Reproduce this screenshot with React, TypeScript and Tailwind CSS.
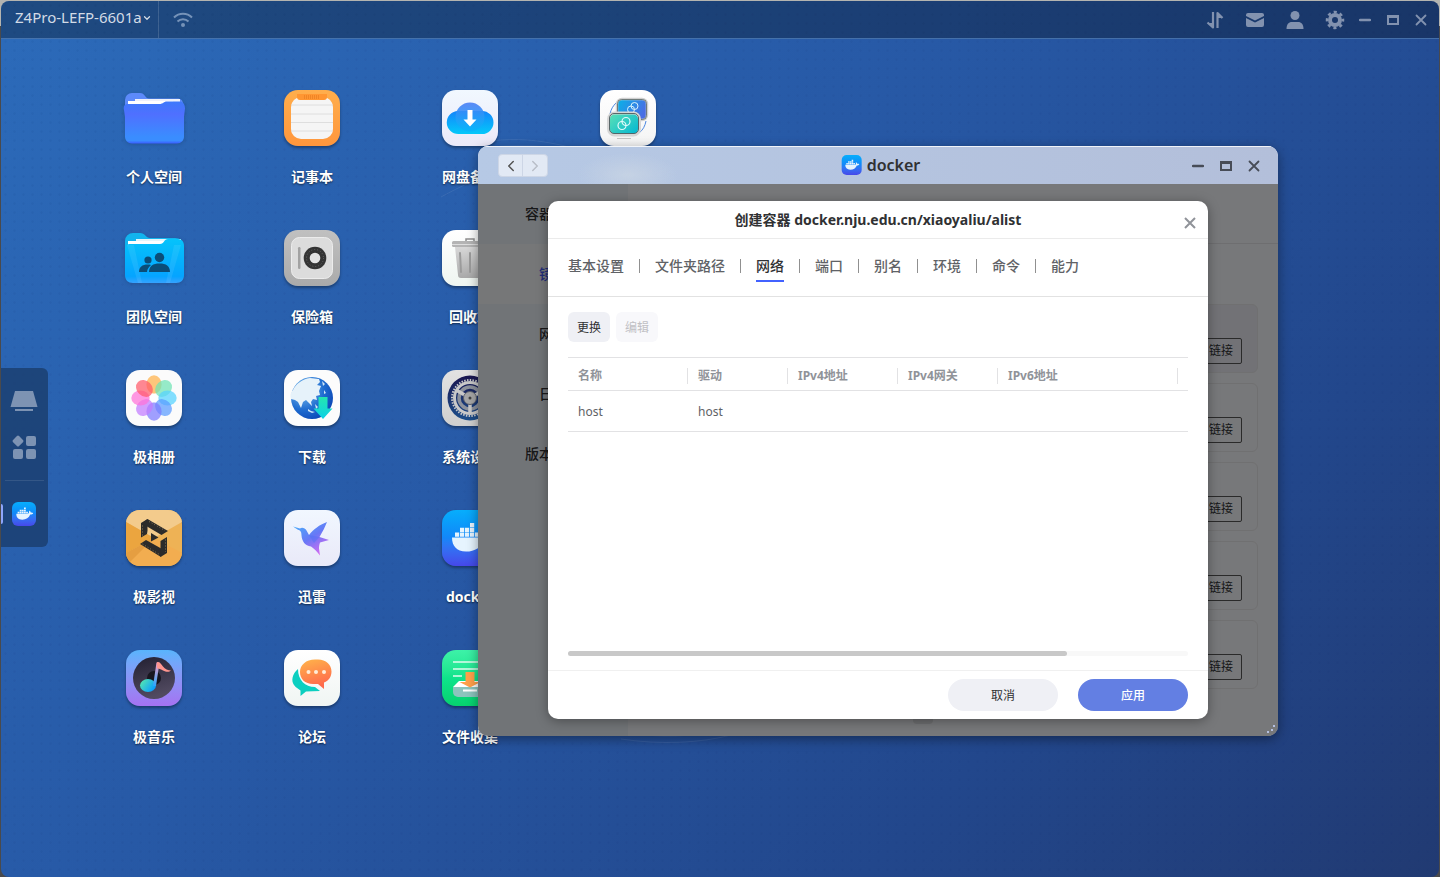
import React from "react";
import { LuChevronDown, LuChevronLeft, LuChevronRight } from "react-icons/lu";

const tile = "h-14 w-14 rounded-[14px] shadow-[0_2px_3px_rgba(0,0,0,0.35)]";

function FolderIcon() {
  return (
    <svg viewBox="0 0 62 56" className="h-14 w-[62px] shrink-0 drop-shadow-sm">
      <defs>
        <linearGradient id="folder" x1="0" y1="0" x2="0" y2="1">
          <stop offset="0" stopColor="#3d79fb" />
          <stop offset="0.3" stopColor="#4f70ff" />
          <stop offset="0.85" stopColor="#3a8dff" />
          <stop offset="0.93" stopColor="#3a8dff" />
          <stop offset="1" stopColor="#3a5cff" />
        </linearGradient>
      </defs>
      <path d="M2 10a7 7 0 0 1 7-7h8c5 0 5 5.500 9 5.500h28c4 0 6 2 6 6v8H2z" fill="#5c8afa" />
      <path d="M12 9h45v10H12z" fill="#eef1fb" />
      <path d="M5 11h45v8H5z" fill="#fff" />
      <path
        d="M1 20c-1-4 1-6 4-6h31c5 0 4-2.500 8-2.500h13c3 0 5 3 5 7l-1 8v20c0 4-3 7-7 7H9c-4 0-7-3-7-7V27z"
        fill="url(#folder)"
      />
    </svg>
  );
}

function TeamIcon() {
  return (
    <svg viewBox="0 0 62 56" className="h-14 w-[62px] shrink-0 drop-shadow-sm">
      <defs>
        <linearGradient id="team" x1="0" y1="0" x2="0" y2="1">
          <stop offset="0" stopColor="#05c3fb" />
          <stop offset="0.85" stopColor="#05a4ff" />
          <stop offset="1" stopColor="#36a2ff" />
        </linearGradient>
      </defs>
      <path d="M2 11a8 8 0 0 1 8-8h7c5 0 6 5 10 5h25c5 0 8 3 8 7v8H2z" fill="#12b4ee" />
      <path d="M13 9h45v8H13z" fill="#e4f5fb" />
      <path d="M5 11h40v8H5z" fill="#fff" />
      <path
        d="M2 21c0-5 2-7 5-7h30c4 0 4-5 8-5h10c4 0 6 3 6 7v29c0 5-3 8-8 8H10c-5 0-8-3-8-8z"
        fill="url(#team)"
      />
      <path d="M4 15h7l8 38h-4zM58 15h-7l-8 38h4z" fill="#fff" opacity="0.08" />
      <g fill="#0b4d78">
        <circle cx="25" cy="30" r="3.600" />
        <path d="M16 42c0-5 3-7.500 9-7.500 1 0 2 0 3 .5-2 2-4 4-4 7z" />
        <circle cx="36.500" cy="27.500" r="4.700" />
        <path d="M26 42c0-6 4-8.500 10.500-8.500S47 36 47 42z" />
      </g>
    </svg>
  );
}

function PhotosIcon() {
  const petals = ["#ffb14a", "#6fe3b4", "#55d2ff", "#5a9bff", "#7d7bff", "#c27bff", "#ff72d8", "#ff5a6a"];
  return (
    <svg viewBox="0 0 56 56" className={`${tile} bg-[#fbfbfb]`}>
      {petals.map((color, i) => (
        <ellipse
          key={color}
          cx="28"
          cy="14.500"
          rx="7.600"
          ry="9.200"
          fill={color}
          fillOpacity="0.72"
          transform={`rotate(${i * 45} 28 28)`}
        />
      ))}
      <circle cx="28" cy="28" r="4.200" fill="#fff" />
    </svg>
  );
}

function MovieIcon() {
  return (
    <svg viewBox="0 0 56 56" className={`${tile} bg-[#eeb255]`}>
      <path d="M0 0h56v12L28 28 0 12z" fill="#f3cb8c" />
      <path d="M0 12l28 16L0 43z" fill="#eba53f" />
      <path d="M0 43l28-15 28 15v13H0z" fill="#f2ad50" />
      <path d="M0 56V43l28-15z" fill="#d88f31" opacity="0.5" />
      <g fill="#2c2b2a">
        <path d="M15 13l6.500-4v11.500L21 24l-6 3.500z" />
        <path d="M21.500 9L42 21l-6.500 4L16 13.500z" />
        <path d="M14 34l6-4 17 9.500-2 7.500z" />
        <path d="M41 27v16l-6.500 4V31z" />
        <path d="M25 23v8.500l7.500-4z" />
      </g>
      <g fill="none" stroke="#a68c60" strokeWidth="0.800" strokeDasharray="1 2">
        <path d="M16.500 15.500v10M23 11.500l16 9M16.500 34l17 10.500M39.500 29.500v12.500" />
      </g>
    </svg>
  );
}

function MusicIcon() {
  return (
    <svg viewBox="0 0 56 56" className={`${tile} bg-gradient-to-b from-[#58b4fc] to-[#a472f2]`}>
      <defs>
        <linearGradient id="disc" x1="0" y1="0" x2="0.300" y2="1">
          <stop offset="0" stopColor="#221f31" />
          <stop offset="1" stopColor="#514a60" />
        </linearGradient>
        <linearGradient id="note" x1="0" y1="0" x2="1" y2="0.600">
          <stop offset="0" stopColor="#5cf0a8" />
          <stop offset="1" stopColor="#0a9dff" />
        </linearGradient>
        <linearGradient id="stem" x1="0" y1="0" x2="0" y2="1">
          <stop offset="0" stopColor="#ff9ac0" />
          <stop offset="1" stopColor="#2aa6ff" />
        </linearGradient>
      </defs>
      <circle cx="28" cy="28" r="21" fill="url(#disc)" />
      <circle cx="28" cy="28" r="7" fill="#18161f" />
      <ellipse cx="22" cy="35.500" rx="8" ry="6.500" fill="url(#note)" />
      <path d="M30.500 12.500h3L30 36h-3z" fill="url(#stem)" />
      <path d="M31 12c3 0 4 2 6 4.500s5 4 8 4c-2 2-5 1.500-8 0s-4-2-6-2z" fill="#ff958f" />
    </svg>
  );
}

function NotesIcon() {
  return (
    <svg viewBox="0 0 56 56" className={`${tile} bg-gradient-to-b from-[#ffae4c] to-[#ff963c]`}>
      <rect x="7" y="7" width="42" height="42" rx="10" fill="#f5f5f5" />
      <path d="M7 15h42M7 24h42M7 32.500h42M7 41h42" stroke="#dedede" strokeWidth="1" />
      <path d="M13 4h30v3a3 3 0 0 1-3 3H16a3 3 0 0 1-3-3z" fill="#ff9632" />
      <path d="M20 6h16M20 8h16" stroke="#e0741b" strokeWidth="1" strokeDasharray="1 1" />
    </svg>
  );
}

function SafeIcon() {
  return (
    <svg viewBox="0 0 56 56" className={`${tile} bg-gradient-to-b from-[#c0c0c0] to-[#aaaaaa]`}>
      <rect x="7.500" y="7.500" width="41" height="41" rx="8" fill="#dcdcdc" stroke="#ececec" />
      <rect x="14" y="17" width="2.500" height="22" rx="1.200" fill="#a2a2a2" />
      <circle cx="31" cy="28" r="11.300" fill="#343434" />
      <circle cx="31" cy="28" r="8.500" fill="none" stroke="#666" strokeDasharray="1 2" />
      <circle cx="31" cy="28" r="5.300" fill="#e3e3e3" />
    </svg>
  );
}

function DownloadIcon() {
  return (
    <svg viewBox="0 0 56 56" className={`${tile} bg-[#fcfcfc]`}>
      <defs>
        <radialGradient id="globe" cx="0.300" cy="0.300" r="0.800">
          <stop offset="0" stopColor="#7fc2f0" />
          <stop offset="0.600" stopColor="#1f6cd0" />
          <stop offset="1" stopColor="#0a45b4" />
        </radialGradient>
        <linearGradient id="down" x1="0" y1="0" x2="0" y2="1">
          <stop offset="0" stopColor="#24e6b0" />
          <stop offset="1" stopColor="#0cd0e6" />
        </linearGradient>
      </defs>
      <circle cx="28" cy="28" r="21" fill="url(#globe)" />
      <path
        d="M9 20c3-6 9-11 17-12l9 1 1 3-3 3 4 1-2 5 1 4-4 1 1 4-4-1-2 3 1 4-3-3-3-3-3 2-2 6-3-6-3-2-4-1c-1-3-1-6 2-9z"
        fill="#e6f2fa"
      />
      <path d="M24 39l3 2 4 1-3 1-4-2zM38 11l3 3-2 2zM31 34l3 3-2 2zM40 20l2 3-2 1z" fill="#cfe6f7" />
      <path d="M34.500 27h9v11.500h5L39 49l-9.500-10.500h5z" fill="url(#down)" />
    </svg>
  );
}

function ThunderIcon() {
  return (
    <svg viewBox="0 0 56 56" className={`${tile} bg-gradient-to-b from-[#f1f7ff] to-[#e9e9f8]`}>
      <defs>
        <linearGradient id="bird" x1="0" y1="0" x2="0.700" y2="1">
          <stop offset="0" stopColor="#45b6fb" />
          <stop offset="0.550" stopColor="#6878f6" />
          <stop offset="1" stopColor="#d56cf2" />
        </linearGradient>
      </defs>
      <path
        d="M9 16.500l7 2c2-1.500 5-.5 6.500 2L25 25c5-6 10-10 18-13-2 5-4 9-7.500 15l9.500 3-9 2.500c-1 3-1 4-1 6l1 7c-3-4-6-7-9-9-6-1-9-5-9.500-11 0-4-1-5-4-6z"
        fill="url(#bird)"
      />
      <path d="M25 25l10.500 2L30 33z" fill="#4a6df5" opacity="0.400" />
    </svg>
  );
}

function ForumIcon() {
  return (
    <svg viewBox="0 0 56 56" className={`${tile} bg-gradient-to-b from-[#ffffff] to-[#f0f5f3]`}>
      <defs>
        <linearGradient id="chat" x1="0" y1="0" x2="0.300" y2="1">
          <stop offset="0" stopColor="#ffb54a" />
          <stop offset="1" stopColor="#ff6a4c" />
        </linearGradient>
      </defs>
      <path d="M14 19C8 24 7 31 10 35c2 3 5 4 6.500 5.500V46l5.500-4.500 14-.5-5-4C21 37 14 30 14 19z" fill="#0ccfc0" />
      <path
        d="M31 9.500h3c8 0 13.500 5 13.500 12 0 5-2.500 9-7.500 11v6.500l-6-5H29c-8 0-13-5-13-12s6-12.500 15-12.500z"
        fill="url(#chat)"
      />
      <g fill="#ffecd8">
        <circle cx="24.500" cy="22" r="2" />
        <circle cx="32" cy="22" r="2" />
        <circle cx="40" cy="22" r="2" />
      </g>
    </svg>
  );
}

function CloudIcon() {
  return (
    <svg viewBox="0 0 56 56" className={`${tile} bg-gradient-to-b from-[#f1f8ff] to-[#ebe9f8]`}>
      <defs>
        <linearGradient id="cloud" x1="0" y1="0" x2="0" y2="1">
          <stop offset="0" stopColor="#1486fb" />
          <stop offset="1" stopColor="#04c8fa" />
        </linearGradient>
        <linearGradient id="puff" x1="0" y1="0" x2="0" y2="1">
          <stop offset="0" stopColor="#4a7df5" />
          <stop offset="1" stopColor="#06b6fb" />
        </linearGradient>
      </defs>
      <path d="M16.500 44a11.500 11.500 0 0 1-.5-23h24a11.500 11.500 0 0 1 0 23z" fill="url(#cloud)" />
      <circle cx="28" cy="27" r="14.500" fill="url(#puff)" opacity="0.900" />
      <path d="M25.500 20h5v9.500h4L28 36.500l-6.500-7h4z" fill="#fff" />
    </svg>
  );
}

function TrashIcon() {
  return (
    <svg viewBox="0 0 56 56" className={`${tile} bg-gradient-to-b from-[#ffffff] to-[#eef5f0]`}>
      <defs>
        <linearGradient id="bin" x1="0" y1="0" x2="0" y2="1">
          <stop offset="0" stopColor="#d8d8d8" />
          <stop offset="1" stopColor="#a9a9a9" />
        </linearGradient>
      </defs>
      <path d="M24 11V9h8v2" fill="none" stroke="#8e8e8e" strokeWidth="1.500" />
      <path d="M13 17h30l-3 28c0 2-1 3-3 3H19c-2 0-3-1-3-3z" fill="url(#bin)" />
      <rect x="10" y="11" width="36" height="6" rx="1.500" fill="#b4b4b4" />
      <path d="M10 14.500h36" stroke="#dedede" />
      <path d="M18 23l1 19M28 23v19M38 23l-1 19" stroke="#9b9b9b" strokeWidth="2" strokeLinecap="round" />
    </svg>
  );
}

function SettingsIcon() {
  return (
    <svg viewBox="0 0 56 56" className={`${tile} bg-gradient-to-b from-[#e2e2e2] to-[#cfcfcf]`}>
      <defs>
        <linearGradient id="deep" x1="0" y1="0" x2="0" y2="1">
          <stop offset="0" stopColor="#1a1650" />
          <stop offset="1" stopColor="#1c4f8c" />
        </linearGradient>
      </defs>
      <circle cx="28" cy="28" r="22.500" fill="url(#deep)" />
      <g fill="none" stroke="#c9c9c9">
        <circle cx="28" cy="28" r="18" strokeWidth="2" strokeDasharray="1.500 1.300" />
        <circle cx="28" cy="28" r="15.500" strokeWidth="3" />
        <circle cx="28" cy="28" r="11" strokeWidth="3.500" stroke="#8d929c" />
        <path d="M28 28v16M28 28l-14-8M28 28l14-8" strokeWidth="3.500" />
      </g>
      <circle cx="28" cy="28" r="6.500" fill="#a7a7a7" stroke="#5a5f6b" />
      <circle cx="28" cy="28" r="1.500" fill="#444" />
    </svg>
  );
}

function DockerIcon({ className }: { className: string }) {
  return (
    <svg viewBox="0 0 56 56" className={`bg-gradient-to-b from-[#07aefc] via-[#1386f8] to-[#4547ea] ${className}`}>
      <g fill="#e6f4fe">
        <path d="M28 13h4.200v4.200H28z" />
        <path d="M18 17.800h4.200V22H18zM23 17.800h4.200V22H23zM28 17.800h4.200V22H28z" />
        <path d="M13 22.600h4.200v4.200H13zM18 22.600h4.200v4.200H18zM23 22.600h4.200v4.200H23zM28 22.600h4.200v4.200H28zM33 22.600h4.200v4.200H33z" />
        <path d="M10 27.600h27c3-.6 3.500-4 2.500-7.600 3 1 4.500 3 4.500 5 2-.6 4-.4 5.500 1-1.500 2.500-4 3.500-7 3.400C39.500 37 33 41.500 24 41.500c-9.500 0-14-5.500-14-13.900z" />
      </g>
    </svg>
  );
}

function CollectIcon() {
  return (
    <svg viewBox="0 0 56 56" className={`${tile} bg-gradient-to-b from-[#3df2a8] via-[#0ee38b] to-[#07d26e]`}>
      <path d="M11 12h34M11 19h34M11 26h9M36 26h9" stroke="#dffbee" strokeWidth="1.500" />
      <path d="M11 37l6-6h22l6 6z" fill="#fff" />
      <path d="M11 37h34v5a5 5 0 0 1-5 5H16a5 5 0 0 1-5-5z" fill="#8cc4bd" />
      <path d="M23.500 22h9v10h6L28 37.500 17.500 32h6z" fill="#ffa04a" />
      <path d="M21 40.500h14" stroke="#fff" strokeWidth="2" />
    </svg>
  );
}

function RemoteIcon() {
  return (
    <svg viewBox="0 0 56 56" className={`${tile} bg-gradient-to-b from-[#ffffff] to-[#f4f4f4]`}>
      <defs>
        <linearGradient id="back" x1="0" y1="0" x2="1" y2="0.400">
          <stop offset="0" stopColor="#06b4e8" />
          <stop offset="1" stopColor="#4a6ee4" />
        </linearGradient>
        <linearGradient id="front" x1="0" y1="0" x2="1" y2="0.800">
          <stop offset="0" stopColor="#5fe3b4" />
          <stop offset="1" stopColor="#05b8d2" />
        </linearGradient>
      </defs>
      <path d="M10 24c1-5 3-8 6-11M46 31c-1 5-3 9-7 12" fill="none" stroke="#4a86e0" />
      <rect x="17" y="9" width="30" height="21" rx="5" fill="url(#back)" stroke="#d0d0d0" strokeWidth="2.500" />
      <rect x="17.500" y="9.500" width="29" height="20" rx="4" fill="none" stroke="#566" strokeWidth="0.800" />
      <g fill="none" stroke="#d8f2fc" strokeWidth="1">
        <circle cx="34.500" cy="16" r="3.500" />
        <circle cx="31" cy="19.500" r="3.500" />
      </g>
      <rect x="8.500" y="23" width="31" height="22" rx="6" fill="url(#front)" stroke="#d6d6d6" strokeWidth="3" />
      <rect x="9.500" y="23.500" width="29" height="20" rx="4.500" fill="none" stroke="#4b5a5c" strokeWidth="0.900" />
      <path d="M17 48.500h14" stroke="#c4c4c4" strokeWidth="1.200" />
      <g fill="none" stroke="#e2fbfb" strokeWidth="1.200">
        <circle cx="26" cy="31.500" r="4" />
        <circle cx="22" cy="35.500" r="4" />
      </g>
    </svg>
  );
}

const apps = [
  { name: "个人空间", icon: <FolderIcon /> },
  { name: "团队空间", icon: <TeamIcon /> },
  { name: "极相册", icon: <PhotosIcon /> },
  { name: "极影视", icon: <MovieIcon /> },
  { name: "极音乐", icon: <MusicIcon /> },
  { name: "记事本", icon: <NotesIcon /> },
  { name: "保险箱", icon: <SafeIcon /> },
  { name: "下载", icon: <DownloadIcon /> },
  { name: "迅雷", icon: <ThunderIcon /> },
  { name: "论坛", icon: <ForumIcon /> },
  { name: "网盘备份", icon: <CloudIcon /> },
  { name: "回收站", icon: <TrashIcon /> },
  { name: "系统设置", icon: <SettingsIcon /> },
  { name: "docker", icon: <DockerIcon className={tile} /> },
  { name: "文件收集", icon: <CollectIcon /> },
  { name: "远程访问", icon: <RemoteIcon /> },
];

const menus = ["容器管理", "镜像", "网络", "日志", "版本信息"];
const tabs = ["基本设置", "文件夹路径", "网络", "端口", "别名", "环境", "命令", "能力"];
const columns = [
  { title: "名称", width: "w-[120px]" },
  { title: "驱动", width: "w-[100px]" },
  { title: "IPv4地址", width: "w-[110px]" },
  { title: "IPv4网关", width: "w-[100px]" },
  { title: "IPv6地址", width: "w-[180px]" },
];

function WindowButtons() {
  return (
    <div className="flex">
      <button aria-label="最小化" className="grid h-7 w-7 place-items-center">
        <svg viewBox="0 0 12 12" className="h-3 w-3">
          <path d="M1 6h10" stroke="currentColor" strokeWidth="2.500" strokeLinecap="round" />
        </svg>
      </button>
      <button aria-label="最大化" className="grid h-7 w-7 place-items-center">
        <svg viewBox="0 0 12 12" className="h-3 w-3">
          <path d="M0 1h12v10H0zM2 4v5h8V4z" fill="currentColor" fillRule="evenodd" />
        </svg>
      </button>
      <button aria-label="关闭" className="grid h-7 w-7 place-items-center">
        <svg viewBox="0 0 12 12" className="h-3 w-3">
          <path d="M1.500 1.500l9 9M10.500 1.500l-9 9" stroke="currentColor" strokeWidth="1.800" strokeLinecap="round" />
        </svg>
      </button>
    </div>
  );
}

function TopBar() {
  return (
    <header className="flex h-[38px] shrink-0 items-center justify-between border-b border-[#4f7db8]/80 bg-black/30 pr-1 text-[#8292af]">
      <div className="flex h-full items-center">
        <button className="flex h-full items-center border-r border-white/15 pb-1 pl-3.5 pr-1.5 text-[15px] text-[#d3dbe6]">
          Z4Pro-LEFP-6601a
          <LuChevronDown className="h-2.5 w-2.5" strokeWidth={3} />
        </button>
        <svg viewBox="0 0 20 16" className="ml-3.5 h-4 w-5 text-[#7592b8]" fill="none" stroke="currentColor" strokeWidth="2">
          <path d="M1 5.500c5-5 13-5 18 0M4.500 9.500c3-3 8-3 11 0" />
          <circle cx="10" cy="13" r="2" fill="currentColor" stroke="none" />
        </svg>
      </div>
      <div className="flex items-center">
        <div className="flex gap-5">
          <button aria-label="传输">
            <svg viewBox="0 0 20 20" className="h-5 w-5" fill="none" stroke="currentColor" strokeWidth="2.200" strokeLinejoin="round">
              <path d="M8 2v15.500L2.500 12.500" />
              <path d="M12.500 18V3l5 5" />
              <path d="M8 18v-5H4zM12.500 3v5h4z" fill="currentColor" stroke="none" />
            </svg>
          </button>
          <button aria-label="消息">
            <svg viewBox="0 0 20 20" className="h-5 w-5" fill="currentColor">
              <path d="M1 5a2 2 0 0 1 2-2h14a2 2 0 0 1 2 2v1l-9 4.500L1 6z" />
              <path d="M1 8l9 4.500L19 8v7a2 2 0 0 1-2 2H3a2 2 0 0 1-2-2z" />
            </svg>
          </button>
          <button aria-label="用户">
            <svg viewBox="0 0 20 20" className="h-5 w-5" fill="currentColor">
              <circle cx="10" cy="5.500" r="4.500" />
              <path d="M1.500 19c0-4.500 2-7 5.500-7h6c3.500 0 5.500 2.500 5.500 7z" />
            </svg>
          </button>
          <button aria-label="设置">
            <svg viewBox="0 0 20 20" className="h-5 w-5" fill="none" stroke="currentColor">
              <circle cx="10" cy="10" r="5" strokeWidth="4" />
              <circle cx="10" cy="10" r="8" strokeWidth="2.500" strokeDasharray="3.140 3.140" strokeDashoffset="1.570" />
            </svg>
          </button>
        </div>
        <div className="ml-1.5">
          <WindowButtons />
        </div>
      </div>
    </header>
  );
}

function Dock() {
  return (
    <nav className="mb-0.5 flex w-[47px] shrink-0 flex-col self-center rounded-r-md bg-[#1c4174]/90 pt-2.5 text-[#7d93b3]">
      <button aria-label="桌面" className="grid h-[46px] place-items-center pr-0.5">
        <svg viewBox="0 0 28 20" className="h-5 w-7" fill="currentColor">
          <path d="M5 0h18l4.500 16H.5z" />
          <path d="M5 18h18v2H5z" />
        </svg>
      </button>
      <button aria-label="应用" className="grid h-[46px] place-items-center pr-0.5">
        <svg viewBox="0 0 24 24" className="h-6 w-6" fill="currentColor">
          <rect x="1.800" y="1.800" width="8.500" height="8.500" rx="1.500" transform="rotate(45 6 6)" />
          <rect x="14" y="1" width="10" height="10" rx="2" />
          <rect x="1" y="14" width="10" height="10" rx="2" />
          <rect x="14" y="14" width="10" height="10" rx="2" />
        </svg>
      </button>
      <hr className="mx-1 mt-2.5 border-white/10" />
      <div className="flex h-[66px] items-center">
        <span className="h-5 w-0.5 rounded-r bg-[#8fa6fb]" />
        <button aria-label="docker" className="ml-[9px]">
          <DockerIcon className="h-6 w-6 rounded-md" />
        </button>
      </div>
    </nav>
  );
}

function ContainerDialog() {
  return (
    <section
      role="dialog"
      aria-labelledby="dialog-title"
      className="flex h-[518px] w-[660px] flex-col rounded-[10px] bg-white shadow-[0_2px_12px_rgba(0,0,0,0.35)]"
    >
      <div className="relative flex h-[38px] shrink-0 items-center justify-center border-b border-[#ebebeb]">
        <h2 id="dialog-title" className="text-sm font-bold text-[#303133]">
          创建容器 docker.nju.edu.cn/xiaoyaliu/alist
        </h2>
        <button aria-label="关闭" className="absolute right-3 top-4 text-[#909399]">
          <svg viewBox="0 0 12 12" className="h-3 w-3">
            <path d="M1 1l10 10M11 1L1 11" stroke="currentColor" strokeWidth="2" />
          </svg>
        </button>
      </div>

      {/* tabs */}
      <div role="tablist" className="flex h-[58px] shrink-0 items-center border-b border-[#e2e2e2] px-5 pb-1">
        {tabs.map((tab, i) => (
          <React.Fragment key={tab}>
            {i > 0 && <span className="mx-[15px] h-3.5 w-px bg-[#909090]" />}
            <button
              role="tab"
              aria-selected={tab === "网络"}
              className={
                tab === "网络"
                  ? "relative text-sm font-medium text-[#303133] after:absolute after:inset-x-0 after:-bottom-1.5 after:h-0.5 after:bg-[#4362ff]"
                  : "text-sm font-medium text-[#606266]"
              }
            >
              {tab}
            </button>
          </React.Fragment>
        ))}
      </div>

      {/* network table */}
      <div className="flex flex-1 flex-col px-5 pt-[15px] pb-3.5 text-xs">
        <div className="flex gap-1.5">
          <button className="h-[30px] w-[42px] rounded-md bg-[#eff0f5] pt-0.5 text-[#303133]">更换</button>
          <button disabled className="h-[30px] w-[42px] rounded-md bg-[#f8f8fb] pt-0.5 text-[#c0c0c4]">
            编辑
          </button>
        </div>
        <table className="mt-[15px] w-full table-fixed border-collapse border-y border-[#e2e2e4] text-left">
          <thead>
            <tr className="h-[33px] border-b border-[#e2e2e4] text-[#909399]">
              {columns.map((column) => (
                <th key={column.title} className={`${column.width} p-0 pt-1 font-bold`}>
                  <div className="border-r border-[#e2e2e4] pl-2.5">{column.title}</div>
                </th>
              ))}
              <th className="p-0" />
            </tr>
          </thead>
          <tbody>
            <tr className="h-[41px] text-[#606266]">
              <td className="p-0 pl-2.5 pt-0.5">host</td>
              <td className="p-0 pl-2.5 pt-0.5">host</td>
              <td />
              <td />
              <td />
              <td />
            </tr>
          </tbody>
        </table>
        <div className="mt-auto h-[5px] rounded-full bg-[#f8f8f8]">
          <div className="h-full w-[499px] rounded-full bg-[#c8c8c8]" />
        </div>
      </div>

      <div className="flex h-[49px] shrink-0 items-center justify-end gap-5 border-t border-[#f0f0f0] px-5 text-xs">
        <button className="h-8 w-[110px] rounded-full bg-[#eff0f5] pt-0.5 text-[#303133]">取消</button>
        <button className="h-8 w-[110px] rounded-full bg-[#637fe3] pt-0.5 font-medium text-white">应用</button>
      </div>
    </section>
  );
}

function DockerWindow() {
  return (
    <section className="absolute left-[477px] top-[107px] flex h-[590px] w-[800px] flex-col overflow-hidden rounded-[10px] bg-[#eff0f4] shadow-[0_3px_12px_rgba(0,0,0,0.4)]">
      <div className="relative flex h-[38px] shrink-0 items-center justify-between border-t border-white/80 bg-[radial-gradient(ellipse_50px_22px_at_150px_28px,#c5d2e4,transparent),linear-gradient(90deg,#b6c9e5,#b3bfda)] pl-5 pr-2.5 text-[#474c57]">
        <div className="flex h-[23px] rounded border border-[#cdd6e6] bg-white/60">
          <button aria-label="后退" className="grid w-6 place-items-center border-r border-[#cdd6e6] text-[#555]">
            <LuChevronLeft className="h-[18px] w-[18px]" />
          </button>
          <button aria-label="前进" className="grid w-6 place-items-center text-[#b9bec8]">
            <LuChevronRight className="h-[18px] w-[18px]" />
          </button>
        </div>
        <h1 className="absolute left-1/2 flex -translate-x-1/2 items-center gap-[5px] pb-0.5 pl-1.5 text-base font-semibold text-[#303133]">
          <DockerIcon className="h-5 w-5 rounded-[5px]" />
          docker
        </h1>
        <WindowButtons />
      </div>

      <div className="relative flex flex-1">
        <aside className="w-[150px] bg-[#e3e8ef]">
          {menus.map((menu) => (
            <button
              key={menu}
              className={
                menu === "镜像"
                  ? "block h-[60px] w-full bg-[#edeef0] text-sm font-medium text-[#4358ee]"
                  : "block h-[60px] w-full text-sm font-medium text-[#303133]"
              }
            >
              {menu}
            </button>
          ))}
        </aside>
        <div className="flex-1">
          <div className="h-[60px] border-b border-[#dcdde0]" />
          <ul className="mt-[60px] space-y-2.5 px-5">
            {[0, 1, 2, 3, 4].map((row) => (
              <li
                key={row}
                className={`flex h-[69px] items-end justify-end rounded-md border border-[#e0e0e2] px-[15px] pb-2 ${
                  row === 0 ? "bg-[#e4e5ec]" : ""
                }`}
              >
                <button className="h-[26px] rounded-xs border border-[#555] px-2 text-xs text-[#303133]">链接</button>
              </li>
            ))}
          </ul>
          <div className="mt-[15px] flex justify-center gap-2.5 text-xs leading-5">
            <button className="h-5 w-5 rounded bg-[#d8dade]">1</button>
            <button className="h-5 w-5 rounded">2</button>
            <button className="h-5 w-5 rounded">3</button>
          </div>
        </div>
        <div className="absolute inset-0 grid place-items-center bg-black/50">
          <ContainerDialog />
        </div>
        <svg viewBox="0 0 10 10" className="absolute bottom-0.5 right-0.5 h-2.5 w-2.5 fill-[#b4bfe0]">
          <path d="M1 7h2v2H1zM5 5h2v2H5zM7 1h2v2H7z" />
        </svg>
      </div>
    </section>
  );
}

export default function App() {
  return (
    <div className="flex min-h-screen flex-col bg-[linear-gradient(#b4b4b0_26px,#4a4a4c_26px)] px-px pt-px font-['Noto_Sans','Noto_Sans_CJK_SC',sans-serif]">
      <div className="flex flex-1 flex-col overflow-hidden rounded-lg bg-[radial-gradient(circle,rgba(10,40,110,0.06)_1px,transparent_1.5px),linear-gradient(135deg,#2c6bba_0%,#2759a6_42%,#22478c_75%,#213a72_100%)] bg-[size:9px_9px,100%_100%]">
        <TopBar />
        <main className="relative flex flex-1">
          {/* wallpaper rings */}
          <svg viewBox="0 0 320 620" className="absolute left-[430px] top-24 h-[620px] w-80" fill="none" stroke="#fff" strokeOpacity="0.08">
            <path d="M10 62C50 40 80 30 140 26M60 6C90 2 120 6 160 18M60 12c40-4 70 0 110 10" />
            <path d="M190 604c40 6 80 4 110-4M200 598c30 5 60 4 90-3" />
          </svg>
          <Dock />
          <ul className="relative grid auto-cols-[158px] grid-flow-col grid-rows-[repeat(5,140px)] pl-[27px] pt-[51px]">
            {apps.map((app) => (
              <li key={app.name}>
                <button className="flex w-full flex-col items-center gap-[21px] text-sm font-bold text-white [text-shadow:0_1px_2px_rgba(0,0,0,0.6)]">
                  {app.icon}
                  {app.name}
                </button>
              </li>
            ))}
          </ul>
          <DockerWindow />
        </main>
      </div>
    </div>
  );
}
